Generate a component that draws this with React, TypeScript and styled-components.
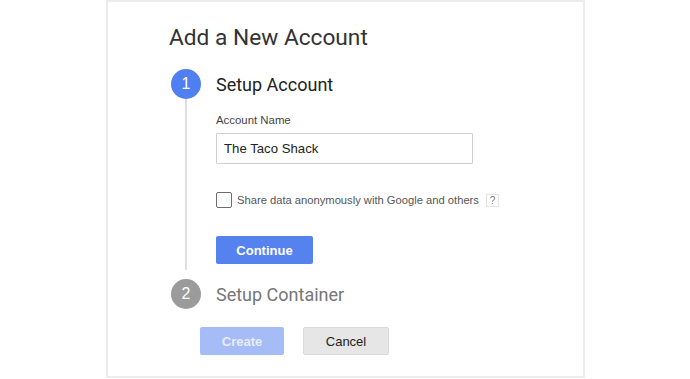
import styled, { createGlobalStyle } from "styled-components";

const GlobalStyle = createGlobalStyle`
  html, body {
    margin: 0;
    padding: 0;
    background: #ffffff;
  }
  body {
    font-family: "Liberation Sans", Arial, sans-serif;
    color: #333;
  }
`;

const App = () => {
  return (
    <>
      <GlobalStyle />
      <Card>
        <Title>Add a New Account</Title>
        <Step>
          <Rail>
            <Badge $active>1</Badge>
            <RailLine />
          </Rail>
          <StepBody $open>
            <StepTitle>Setup Account</StepTitle>
            <FieldLabel>Account Name</FieldLabel>
            <TextInput defaultValue="The Taco Shack" />
            <CheckRow>
              <CheckBox type="checkbox" />
              <CheckLabel>Share data anonymously with Google and others</CheckLabel>
              <HelpTip>?</HelpTip>
            </CheckRow>
            <PrimaryButton>Continue</PrimaryButton>
          </StepBody>
        </Step>
        <Step>
          <Rail>
            <Badge>2</Badge>
          </Rail>
          <StepBody>
            <StepTitle $muted>Setup Container</StepTitle>
          </StepBody>
        </Step>
        <Footer>
          <PrimaryButton $disabled $wide>
            Create
          </PrimaryButton>
          <GreyButton>Cancel</GreyButton>
        </Footer>
      </Card>
    </>
  );
};

const Card = styled.div`
  box-sizing: border-box;
  margin-left: 106px;
  width: 479px;
  height: 378px;
  border: 2px solid #ececec;
  padding: 20px 0 0 61px;
  display: flex;
  flex-direction: column;
`;

const Title = styled.h1`
  margin: 0 0 15px 0;
  font-family: Roboto, "Liberation Sans", sans-serif;
  font-weight: 400;
  font-size: 22.7px;
  line-height: 32px;
  color: #333;
`;

const Step = styled.div`
  display: flex;
  align-items: stretch;
`;

const Rail = styled.div`
  width: 30px;
  margin-left: 2px;
  display: flex;
  flex-direction: column;
  align-items: center;
`;

const Badge = styled.div<{ $active?: boolean }>`
  width: 30px;
  height: 30px;
  border-radius: 50%;
  flex: none;
  background: ${(p) => (p.$active ? "#4f7ff0" : "#9b9b9b")};
  color: #fff;
  font-family: "Liberation Sans", Arial, sans-serif;
  font-size: 16px;
  display: flex;
  align-items: center;
  justify-content: center;
`;

const RailLine = styled.div`
  flex: 1;
  width: 2px;
  background: #dedede;
  margin-bottom: 9px;
`;

const StepBody = styled.div<{ $open?: boolean }>`
  margin-left: 15px;
  padding-bottom: ${(p) => (p.$open ? "15px" : "0")};
  display: flex;
  flex-direction: column;
  align-items: flex-start;
`;

const StepTitle = styled.div<{ $muted?: boolean }>`
  height: 30px;
  display: flex;
  align-items: center;
  font-family: Roboto, "Liberation Sans", sans-serif;
  font-size: 18px;
  color: ${(p) => (p.$muted ? "#767676" : "#222")};
`;

const FieldLabel = styled.div`
  margin-top: 15px;
  font-size: 11.4px;
  color: #444;
`;

const TextInput = styled.input`
  box-sizing: border-box;
  margin-top: 7px;
  width: 257px;
  height: 31px;
  border: 1px solid #cfcfcf;
  border-radius: 1px;
  padding: 0 7px;
  font-family: "Liberation Sans", Arial, sans-serif;
  font-size: 13.2px;
  color: #222;
  outline: none;
`;

const CheckRow = styled.div`
  margin-top: 28px;
  display: flex;
  align-items: center;
`;

const CheckBox = styled.input`
  appearance: none;
  box-sizing: border-box;
  margin: 0;
  width: 16px;
  height: 16px;
  border: 1.5px solid #6d6d6d;
  border-radius: 2px;
  background: #fff;
`;

const CheckLabel = styled.span`
  margin-left: 5px;
  font-size: 11.2px;
  color: #555;
`;

const HelpTip = styled.span`
  box-sizing: border-box;
  margin-left: 7px;
  width: 13px;
  height: 13px;
  border: 1px solid #e2e2e2;
  font-size: 10px;
  color: #777;
  display: flex;
  align-items: center;
  justify-content: center;
`;

const PrimaryButton = styled.button<{ $disabled?: boolean; $wide?: boolean }>`
  box-sizing: border-box;
  margin-top: ${(p) => (p.$wide ? "0" : "28px")};
  width: ${(p) => (p.$wide ? "84px" : "97px")};
  height: 28px;
  border: none;
  border-radius: 2px;
  background: ${(p) => (p.$disabled ? "#a6bcf6" : "#5582ee")};
  color: ${(p) => (p.$disabled ? "#e6ecfc" : "#fff")};
  font-family: "Liberation Sans", Arial, sans-serif;
  font-weight: 700;
  font-size: 13px;
`;

const GreyButton = styled.button`
  box-sizing: border-box;
  width: 86px;
  height: 28px;
  border: 1px solid #dadada;
  border-radius: 2px;
  background: #e6e6e6;
  color: #222;
  font-family: "Liberation Sans", Arial, sans-serif;
  font-size: 13px;
`;

const Footer = styled.div`
  margin-top: 18px;
  margin-left: 31px;
  display: flex;
  gap: 19px;
`;

export default App;
